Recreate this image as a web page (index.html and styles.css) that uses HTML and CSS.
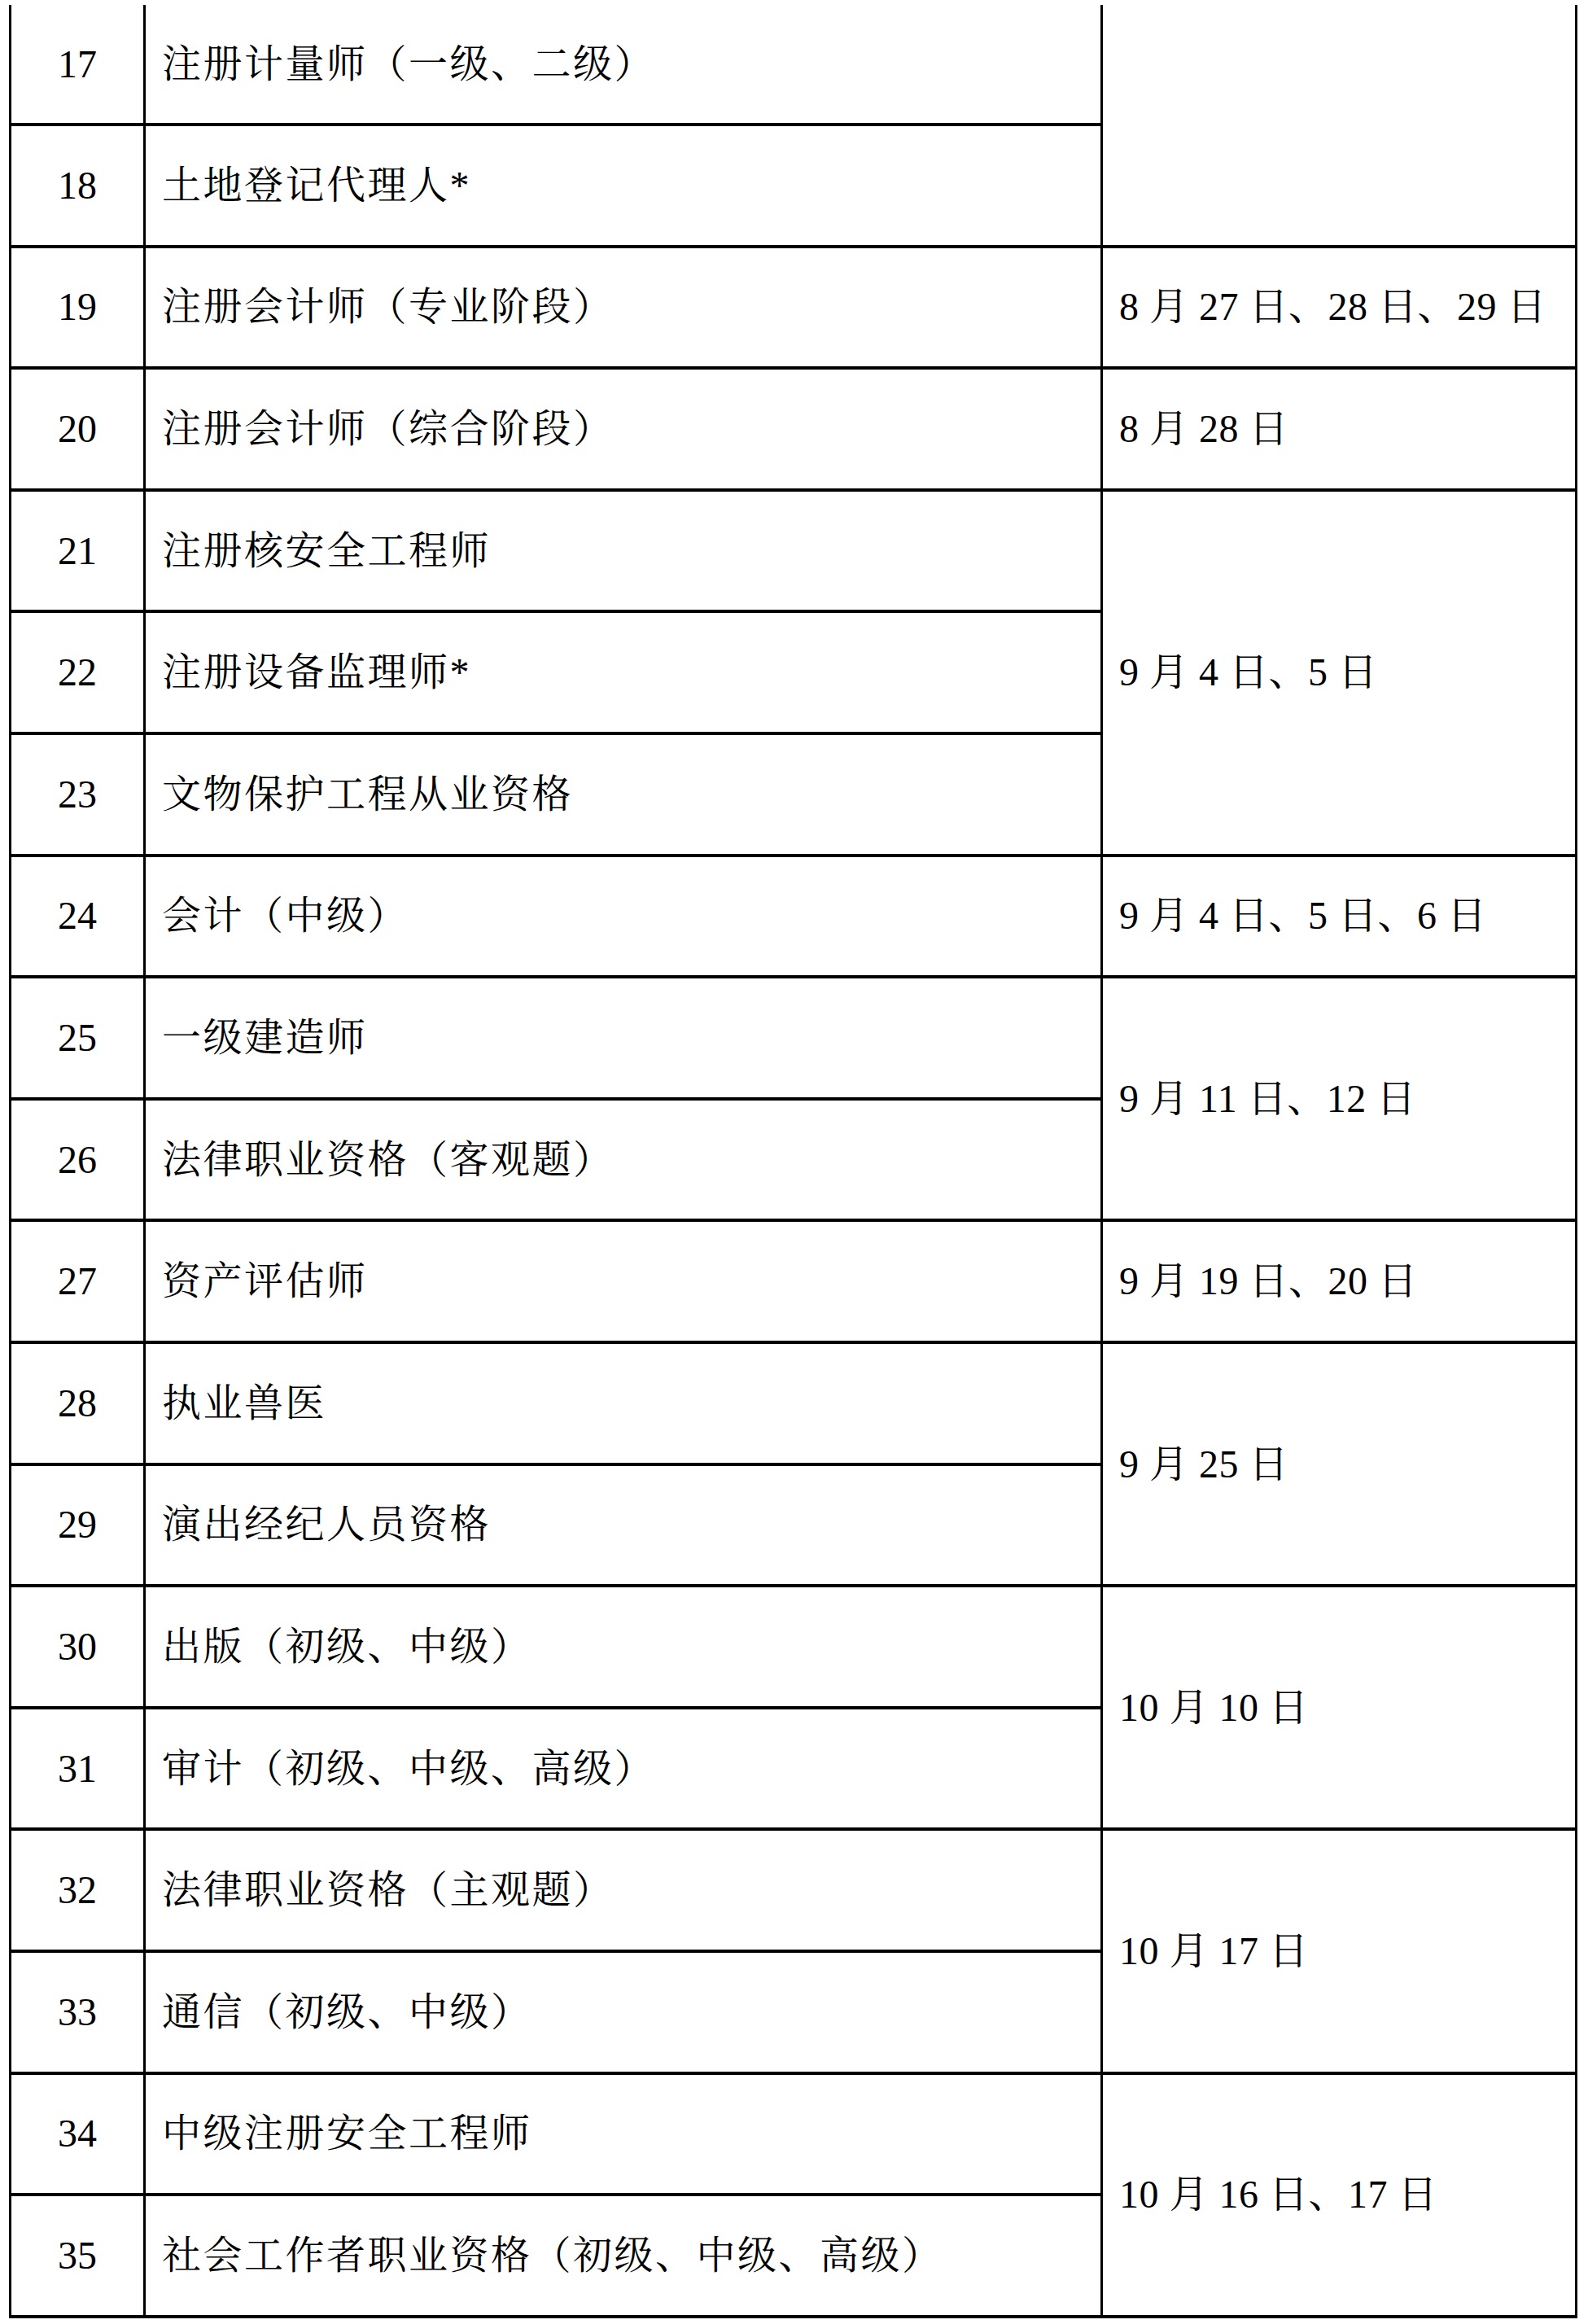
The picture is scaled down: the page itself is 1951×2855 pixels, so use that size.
FILE: index.html
```html
<!DOCTYPE html>
<html lang="zh-CN">
<head>
<meta charset="utf-8">
<title>考试时间表</title>
<link rel="stylesheet" href="styles.css">
</head>
<body>
<div class="sheet">
  <div class="cell num first">17</div>
  <div class="cell name first">注册计量师（一级、二级）</div>
  <div class="cell date first span2"></div>

  <div class="cell num">18</div>
  <div class="cell name">土地登记代理人*</div>

  <div class="cell num">19</div>
  <div class="cell name">注册会计师（专业阶段）</div>
  <div class="cell date">8 月 27 日、28 日、29 日</div>

  <div class="cell num">20</div>
  <div class="cell name">注册会计师（综合阶段）</div>
  <div class="cell date">8 月 28 日</div>

  <div class="cell num">21</div>
  <div class="cell name">注册核安全工程师</div>
  <div class="cell date span3">9 月 4 日、5 日</div>

  <div class="cell num">22</div>
  <div class="cell name">注册设备监理师*</div>

  <div class="cell num">23</div>
  <div class="cell name">文物保护工程从业资格</div>

  <div class="cell num">24</div>
  <div class="cell name">会计（中级）</div>
  <div class="cell date">9 月 4 日、5 日、6 日</div>

  <div class="cell num">25</div>
  <div class="cell name">一级建造师</div>
  <div class="cell date span2">9 月 11 日、12 日</div>

  <div class="cell num">26</div>
  <div class="cell name">法律职业资格（客观题）</div>

  <div class="cell num">27</div>
  <div class="cell name">资产评估师</div>
  <div class="cell date">9 月 19 日、20 日</div>

  <div class="cell num">28</div>
  <div class="cell name">执业兽医</div>
  <div class="cell date span2">9 月 25 日</div>

  <div class="cell num">29</div>
  <div class="cell name">演出经纪人员资格</div>

  <div class="cell num">30</div>
  <div class="cell name">出版（初级、中级）</div>
  <div class="cell date span2">10 月 10 日</div>

  <div class="cell num">31</div>
  <div class="cell name">审计（初级、中级、高级）</div>

  <div class="cell num">32</div>
  <div class="cell name">法律职业资格（主观题）</div>
  <div class="cell date span2">10 月 17 日</div>

  <div class="cell num">33</div>
  <div class="cell name">通信（初级、中级）</div>

  <div class="cell num">34</div>
  <div class="cell name">中级注册安全工程师</div>
  <div class="cell date span2">10 月 16 日、17 日</div>

  <div class="cell num">35</div>
  <div class="cell name">社会工作者职业资格（初级、中级、高级）</div>
</div>
</body>
</html>
```

FILE: styles.css
```css
html, body {
  margin: 0;
  padding: 0;
  background: #ffffff;
}

body {
  width: 1951px;
  height: 2855px;
  overflow: hidden;
  color: #000000;
  font-family: "Liberation Serif", "Noto Serif CJK SC", "Noto Sans CJK SC", serif;
  font-size: 48px;
}

.sheet {
  margin: 6px 0 0 11px;
  display: grid;
  grid-template-columns: 165px 1176px 583px;
  grid-template-rows: 149px repeat(18, 149.6px);
  border-left: 3px solid #000;
  width: max-content;
}

.cell {
  display: flex;
  align-items: center;
  border-right: 3px solid #000;
  border-bottom: 4px solid #000;
  line-height: 1;
  white-space: nowrap;
}

.num {
  grid-column: 1;
  justify-content: center;
}

.name {
  grid-column: 2;
  padding-left: 20px;
  letter-spacing: 2.5px;
}

.date {
  grid-column: 3;
  padding-left: 20px;
  letter-spacing: 0.5px;
}

.span2 {
  grid-row: span 2;
}

.span3 {
  grid-row: span 3;
}
```
